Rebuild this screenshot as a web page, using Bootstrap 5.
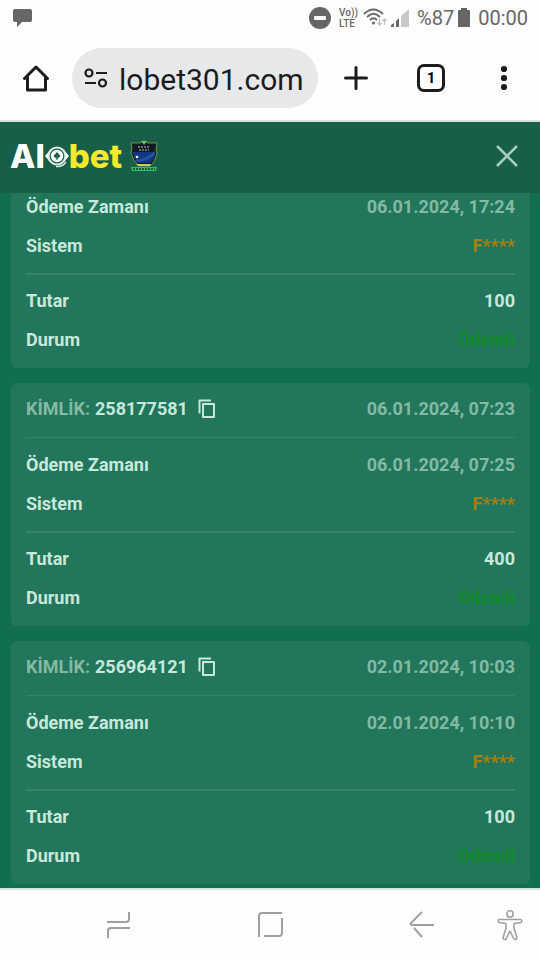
<!DOCTYPE html>
<html lang="tr">
<head>
<meta charset="utf-8">
<meta name="viewport" content="width=device-width, initial-scale=1">
<title>Alobet</title>
<link href="https://cdn.jsdelivr.net/npm/bootstrap@5.3.0/dist/css/bootstrap.min.css" rel="stylesheet">
<style>
body { font-family: Roboto, "Liberation Sans", sans-serif; background: #fefefe; }
svg { display: block; flex: none; }
.btn, .btn:hover { color: inherit; }
.status-bar { height: 36px; padding: 0 12px; color: #666; }
.status-text { font: 20px/36px Roboto, sans-serif; }
.volte { font: 500 10px/11px Roboto, sans-serif; width: 20px; }
.browser-bar { height: 84px; padding: 0 32px 0 17px; color: #1c1c1e; }
.address { height: 60px; margin: 0 20px 0 21px; padding: 0 10px 0 12px; background: #e7e8ea; width: 246px; }
.address input { font-size: 30px; line-height: 40px; color: #1c1c1e; outline: 0; min-width: 0; margin-left: 11px; padding: 3px 0 0; }
.tab-count { width: 28px; height: 28px; border: 3px solid #1c1c1e; border-radius: 7px; font: 700 15px/22px Roboto, sans-serif; }
.site { border-top: 2px solid #d5e5de; border-bottom: 2px solid #d5e5de; background: #116e50; min-height: 0; }
.site-head { height: 71px; padding: 0 21px 4px 10px; background: #175f48; color: #a9cdbf; z-index: 1; }
.brand { font: 800 33px/40px Inter, "Open Sans", sans-serif; color: #fff; }
.brand:hover { color: #fff; }
.brand-accent { color: #f5e92a; }
.history { min-height: 0; padding: 0 10px 4px 11px; gap: 15px; }
.payment { background: #22765b; border-radius: 6px; padding: 0 15px 9px; font-weight: 700; font-size: 18px; line-height: 39px; color: #c8e8dc; }
.payment-head { height: 54px; padding-bottom: 3px; }
.payment dl { padding-top: 7px; border-top: 1px solid #358468; }
.payment dl + dl { border-top: 2px solid #358468; padding-top: 6px; margin-top: 8px; }
.soft { color: #82baa5; }
.kind { margin-right: 5px; }
.system { color: #a5800f; }
.paid { color: #128a2c; }
.copy { margin-left: 10px; }
.system-nav { height: 70px; padding: 0 16px 0 104px; color: #a0a0a0; }
.access { margin-left: 61px; }
</style>
<script src="https://cdn.jsdelivr.net/npm/bootstrap@5.3.0/dist/js/bootstrap.bundle.min.js"></script>
</head>
<body>
<svg class="d-none" aria-hidden="true">
  <symbol id="copy" viewBox="0 0 18 20"><path d="M1.500 14.500V1.500H13M5 5H16V18H5Z" fill="none" stroke="currentColor" stroke-width="2" stroke-linejoin="round"/></symbol>
</svg>
<div class="vh-100 d-flex flex-column overflow-hidden">
  <div class="status-bar d-flex align-items-center flex-shrink-0">
    <svg width="21" height="20" viewBox="0 0 21 20" fill="#666"><path d="M3 1H18Q20 1 20 3V12Q20 14 18 14H10L5 19V14H3Q1 14 1 12V3Q1 1 3 1Z"/></svg>
    <svg class="ms-auto" width="22" height="22" viewBox="0 0 22 22"><circle cx="11" cy="11" r="11" fill="#666"/><rect x="5" y="9" width="12" height="4" rx="1" fill="#fff"/></svg>
    <div class="volte ms-2">Vo))<br>LTE</div>
    <svg class="ms-1" width="24" height="20" viewBox="0 0 24 20" fill="none" stroke="#666" stroke-width="1.800"><path d="M1 6Q10.500-3 20 6M4 9Q10.500 2.500 17 9M7 12Q10.500 8.500 14 12"/><circle cx="10.500" cy="15" r="1.500" fill="#666" stroke="none"/><path d="M16.500 11V17M14.500 15L16.500 17L18.500 15M21.500 17V11M19.500 13L21.500 11L23.500 13" stroke="#bbb" stroke-width="1.200"/></svg>
    <svg class="ms-1" width="18" height="18" viewBox="0 0 18 18"><path d="M0 18V16L3 14V18ZM5 18V12L8 9V18Z" fill="#666"/><path d="M10 18V7L18 0V18Z" fill="#c9c9c9"/></svg>
    <span class="status-text ms-2">%87</span>
    <svg class="ms-1 me-2" width="12" height="20" viewBox="0 0 12 20" fill="#666"><path d="M3 0H9V2H11Q12 2 12 3V18Q12 19 11 19H1Q0 19 0 18V3Q0 2 1 2H3Z"/></svg>
    <span class="status-text">00:00</span>
  </div>

  <div class="browser-bar d-flex align-items-center flex-shrink-0">
    <button class="btn p-0 border-0 ms-1" aria-label="Ana sayfa"><svg width="30" height="30" viewBox="0 0 30 30" fill="none" stroke="currentColor" stroke-width="3" stroke-linecap="round" stroke-linejoin="round"><path d="M3.500 15.500L15 4L26.500 15.500M6.500 14V27H24.500V14"/></svg></button>
    <div class="address d-flex align-items-center rounded-pill">
      <svg width="24" height="20" viewBox="0 0 24 20" fill="none" stroke="currentColor" stroke-width="2.200"><circle cx="5" cy="5" r="3.500"/><path d="M12 5H23M1 15H12"/><circle cx="18.500" cy="15" r="3.500"/></svg>
      <input class="bg-transparent border-0 w-100" type="text" value="lobet301.com" aria-label="Adres">
    </div>
    <div class="d-flex align-items-center justify-content-between flex-grow-1 ps-1">
      <button class="btn p-0 border-0" aria-label="Yeni sekme"><svg width="28" height="28" viewBox="0 0 28 28" stroke="currentColor" stroke-width="3" stroke-linecap="round"><path d="M14 3.500V24.500M3.500 14H24.500"/></svg></button>
      <button class="tab-count bg-transparent p-0 me-2" aria-label="Sekmeler">1</button>
      <button class="btn p-0 border-0" aria-label="Menü"><svg width="8" height="28" viewBox="0 0 8 28" fill="currentColor"><circle cx="4" cy="5" r="3.100"/><circle cx="4" cy="14" r="3.100"/><circle cx="4" cy="23" r="3.100"/></svg></button>
    </div>
  </div>

  <main class="site d-flex flex-column flex-grow-1">
    <header class="site-head d-flex align-items-center flex-shrink-0">
      <a class="brand d-flex align-items-center text-decoration-none" href="#">Al<svg width="24" height="26" viewBox="0 0 24 26"><path d="M0 13L5 7V19ZM24 13L19 7V19Z" fill="#fff"/><circle cx="12" cy="13" r="9.500" fill="#dcebe5"/><circle cx="12" cy="13" r="6.800" fill="#fff" stroke="#175f48" stroke-width="1.200"/><path d="M12 9L15.500 13Q14 15.500 12.500 14.500L13.200 16.500H10.800L11.500 14.500Q9.500 15.500 8.500 13Z" fill="#175f48"/><path d="M11 23.500Q17 24.500 21 19" fill="none" stroke="#dcebe5" stroke-width="1.300"/></svg><span class="brand-accent">bet</span></a>
      <svg class="ms-2" width="28" height="32" viewBox="0 0 28 32"><path d="M1 3H10L14 1L18 3H27Q25 10 27 13Q25 22 20 26H9Q3 21 1 13Q3 9 1 3Z" fill="#101a20" stroke="#9aa54e" stroke-width=".8"/><path d="M2 12H26Q24 20 20 23H9Q4 18 2 12Z" fill="#12397f"/><path d="M5 20Q14 20 25 11L24 15Q17 22 7 22Z" fill="#2454a5"/><circle cx="7" cy="17" r="1.300" fill="#fff"/><path d="M11 1H17L14 5Z" fill="#4fca6a"/><path d="M8 7H20M9 10H19" stroke="#7d8a8e" stroke-width="1.500" stroke-dasharray="2 1"/><path d="M6 24H21L20 26H8Z" fill="#d3c765"/><path d="M1 27H27L26 31H2Z" fill="#32bd68"/><path d="M3 29H25" stroke="#123f2d" stroke-width="1.300" stroke-dasharray="2 1"/></svg>
      <button class="btn p-0 border-0 ms-auto" aria-label="Kapat"><svg width="24" height="24" viewBox="0 0 24 24" stroke="currentColor" stroke-width="2.600"><path d="M2 2L22 22M22 2L2 22"/></svg></button>
    </header>

    <div class="history d-flex flex-column justify-content-end flex-grow-1">
      <article class="payment">
        <dl class="m-0">
          <div class="d-flex justify-content-between"><dt>Ödeme Zamanı</dt><dd class="soft m-0">06.01.2024, 17:24</dd></div>
          <div class="d-flex justify-content-between"><dt>Sistem</dt><dd class="system m-0">F****</dd></div>
        </dl>
        <dl class="mb-0">
          <div class="d-flex justify-content-between"><dt>Tutar</dt><dd class="m-0">100</dd></div>
          <div class="d-flex justify-content-between"><dt>Durum</dt><dd class="paid m-0">Ödendi</dd></div>
        </dl>
      </article>

      <article class="payment">
        <div class="payment-head d-flex align-items-center">
          <span class="soft kind">KİMLİK:</span> <span>258177581</span>
          <button class="btn p-0 border-0 copy" aria-label="Kopyala"><svg width="18" height="20"><use href="#copy"/></svg></button>
          <time class="soft ms-auto">06.01.2024, 07:23</time>
        </div>
        <dl class="m-0">
          <div class="d-flex justify-content-between"><dt>Ödeme Zamanı</dt><dd class="soft m-0">06.01.2024, 07:25</dd></div>
          <div class="d-flex justify-content-between"><dt>Sistem</dt><dd class="system m-0">F****</dd></div>
        </dl>
        <dl class="mb-0">
          <div class="d-flex justify-content-between"><dt>Tutar</dt><dd class="m-0">400</dd></div>
          <div class="d-flex justify-content-between"><dt>Durum</dt><dd class="paid m-0">Ödendi</dd></div>
        </dl>
      </article>

      <article class="payment">
        <div class="payment-head d-flex align-items-center">
          <span class="soft kind">KİMLİK:</span> <span>256964121</span>
          <button class="btn p-0 border-0 copy" aria-label="Kopyala"><svg width="18" height="20"><use href="#copy"/></svg></button>
          <time class="soft ms-auto">02.01.2024, 10:03</time>
        </div>
        <dl class="m-0">
          <div class="d-flex justify-content-between"><dt>Ödeme Zamanı</dt><dd class="soft m-0">02.01.2024, 10:10</dd></div>
          <div class="d-flex justify-content-between"><dt>Sistem</dt><dd class="system m-0">F****</dd></div>
        </dl>
        <dl class="mb-0">
          <div class="d-flex justify-content-between"><dt>Tutar</dt><dd class="m-0">100</dd></div>
          <div class="d-flex justify-content-between"><dt>Durum</dt><dd class="paid m-0">Ödendi</dd></div>
        </dl>
      </article>
    </div>
  </main>

  <nav class="system-nav d-flex align-items-center flex-shrink-0" aria-label="Sistem">
    <div class="d-flex justify-content-between flex-grow-1">
      <button class="btn p-0 border-0" aria-label="Son uygulamalar"><svg width="28" height="28" viewBox="0 0 28 28" fill="none" stroke="currentColor" stroke-width="2"><path d="M3 11H22Q25 11 25 8V1M26 17H7Q4 17 4 20V27"/></svg></button>
      <button class="btn p-0 border-0" aria-label="Ana ekran"><svg width="28" height="28" viewBox="0 0 28 28" fill="none" stroke="currentColor" stroke-width="2"><path d="M3 26V5Q3 2 6 2H26M26 7V22Q26 25 23 25H8"/></svg></button>
      <button class="btn p-0 border-0" aria-label="Geri"><svg width="28" height="28" viewBox="0 0 28 28" fill="none" stroke="currentColor" stroke-width="2"><path d="M15 1L4 12Q3 14 5 14H27M7 17L15 26"/></svg></button>
    </div>
    <button class="btn p-0 border-0 access" aria-label="Erişilebilirlik"><svg width="28" height="32" viewBox="0 0 28 32" fill="none" stroke="currentColor" stroke-width="1.600" stroke-linejoin="round"><circle cx="14" cy="5" r="3.200"/><path d="M3 10.500H25Q26.500 12.500 25 13.500L18 14.500V19L21 29Q19.500 31.500 18 30L14 22L10 30Q8 31.500 7 29L10 19V14.500L3 13.500Q1.500 12 3 10.500Z"/></svg></button>
  </nav>
</div>
</body>
</html>
